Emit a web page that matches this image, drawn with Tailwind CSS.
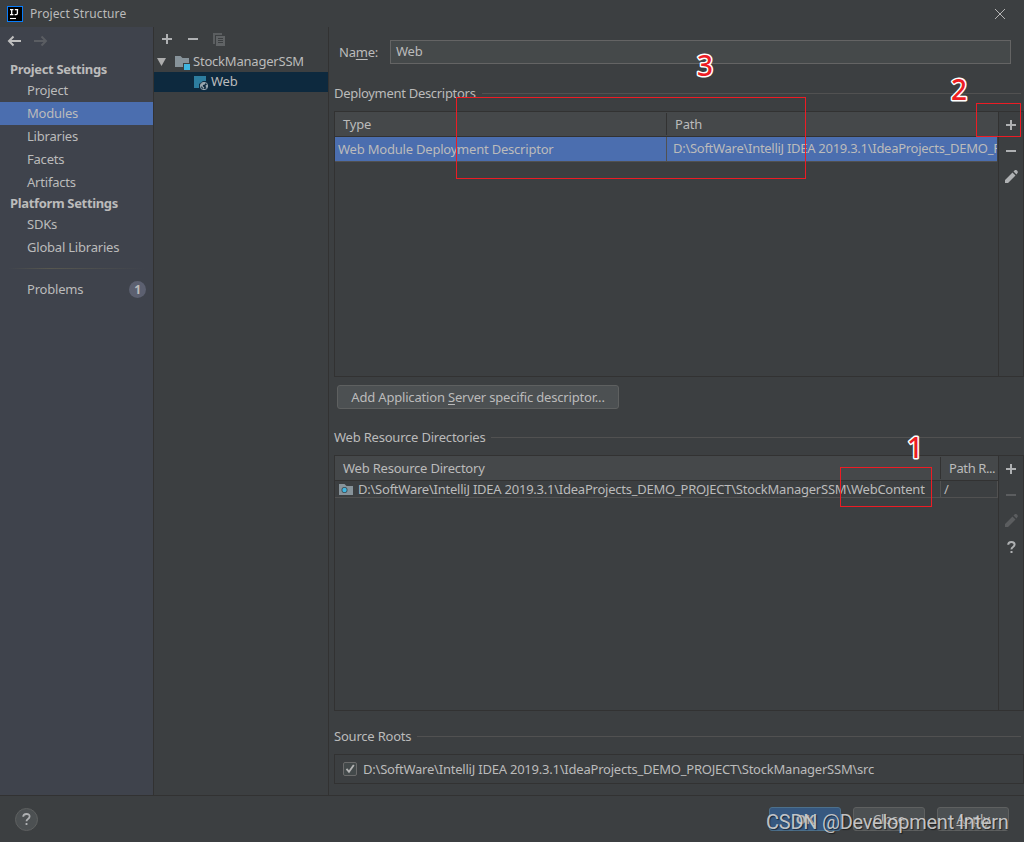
<!DOCTYPE html>
<html lang="en">

<head>
	<meta charset="UTF-8" />
	<meta name="viewport" content="width=device-width, initial-scale=1" />
	<title>Project Structure</title>
	<script src="https://cdn.jsdelivr.net/npm/@tailwindcss/browser@4"></script>
</head>

<body class="bg-[#3c3f41]">
	<div class="relative w-[1024px] h-[842px] overflow-hidden flex flex-col bg-[#3c3f41] text-[#bbbbbb] font-['Noto_Sans','Open_Sans',sans-serif] text-[13px] leading-[18px] tracking-[-0.21px] whitespace-nowrap">

		<!-- Title bar -->
		<header class="h-[27px] shrink-0 flex items-center pl-[7px] pr-[18px]">
			<svg class="w-4 h-4 shrink-0" viewBox="0 0 16 16">
				<rect width="16" height="16" fill="#087cfa" />
				<rect x="1" y="1" width="14" height="14" fill="#000" />
				<path d="M3 3.6h3.4M4.7 3.6v5M3 8.6h3.4M7.8 3.6h3.4M10.4 3.6v3.6q0 1.4-1.3 1.4H7.6" fill="none" stroke="#fff" stroke-width="1.3" />
				<path d="M3 12.5h6" stroke="#fff" stroke-width="1.1" />
			</svg>
			<span class="ml-[7px] text-[12px] tracking-[0.1px]">Project Structure</span>
			<svg class="ml-auto w-3 h-3" viewBox="0 0 12 12" stroke="#b4b4b4" stroke-width="1"><path d="M1 1l10 10M11 1L1 11" /></svg>
		</header>

		<div class="h-[768px] shrink-0 flex">
			<!-- Settings menu -->
			<nav class="w-[153px] shrink-0 bg-[#3f434c]">
				<div class="h-[33px] pt-[8px] pl-[7px] flex gap-[13px]">
					<svg class="w-[14px] h-3" viewBox="0 0 14 12" fill="none" stroke="#bfbfbf" stroke-width="2"><path d="M14 6H2M6.500 1.500L2 6l4.500 4.500" /></svg>
					<svg class="w-[14px] h-3" viewBox="0 0 14 12" fill="none" stroke="#5a5d62" stroke-width="2"><path d="M0 6h12M7.500 1.500L12 6l-4.500 4.500" /></svg>
				</div>
				<div class="h-[19px] pl-[10px] font-bold tracking-[-0.34px]">Project Settings</div>
				<ul class="leading-[23px]">
					<li class="h-[23px] pl-[27px]">Project</li>
					<li class="h-[23px] pl-[27px] bg-[#4b6eaf]">Modules</li>
					<li class="h-[23px] pl-[27px]">Libraries</li>
					<li class="h-[23px] pl-[27px]">Facets</li>
					<li class="h-[23px] pl-[27px]">Artifacts</li>
				</ul>
				<div class="h-[19px] pl-[10px] font-bold tracking-[-0.34px]">Platform Settings</div>
				<ul class="leading-[23px]">
					<li class="h-[23px] pl-[27px]">SDKs</li>
					<li class="h-[23px] pl-[27px]">Global Libraries</li>
				</ul>
				<div class="mt-[9px] mx-[8px] h-px bg-linear-to-r from-transparent via-[#57574f] via-30% to-transparent"></div>
				<div class="mt-[9px] h-[23px] pl-[27px] pr-[7px] flex items-center justify-between">
					<span class="-mt-px">Problems</span>
					<span class="w-[17px] h-[17px] rounded-full bg-[#5c6070] text-center text-[12px] leading-[17px] font-bold">1</span>
				</div>
			</nav>

			<!-- Module tree -->
			<aside class="w-[176px] shrink-0 border-x border-[#323232]">
				<div class="h-[25px] pl-[8px] pt-[6px] flex gap-[14px]">
					<svg class="w-[11px] h-3" viewBox="0 0 11 12" stroke="#afb1b3" stroke-width="2"><path d="M0 6h10M5 1v10" /></svg>
					<svg class="w-[11px] h-3 ml-px" viewBox="0 0 11 12" stroke="#afb1b3" stroke-width="2"><path d="M0 6h10" /></svg>
					<svg class="w-3 h-[13px]" viewBox="0 0 12 13"><path d="M0 0h9v2H2v9H0z" fill="#5b5e60" /><path d="M3 3h9v10H3z" fill="#606365" /><path d="M5 5.500h5M5 7.500h5M5 9.500h5" stroke="#3c3f41" /></svg>
				</div>
				<div class="h-5 flex items-center">
					<svg class="w-[9px] h-2 ml-[3px]" viewBox="0 0 9 8"><path d="M0 0h9L4.500 8z" fill="#adadad" /></svg>
					<svg class="w-[15px] h-[14px] ml-[9px] mt-[2px]" viewBox="0 0 15 14"><path d="M0 0h5.500l2 2H14v5H8v4H0z" fill="#87939a" /><path d="M9 8h6v6H9z" fill="#40b6e0" /></svg>
					<span class="ml-[3px] -mt-[2px]">StockManagerSSM</span>
				</div>
				<div class="h-5 flex items-center bg-[#0d293e]">
					<svg class="w-[15px] h-[15px] ml-[40px] mt-[3px]" viewBox="0 0 15 15"><path d="M0 0h12v5H9L5 8v4H0z" fill="#2d7d9f" /><circle cx="10" cy="10" r="3.700" fill="#0d293e" stroke="#9aa7b0" stroke-width="1" /><path d="M6.800 8.200L9 6.600l2.400.4-.6 1.400-1.800.6-.2 1.400 1.400.6-.2 2.200-1.400-1.600-1.800-1.600zM11.600 9.200l1.900-.4-.3 2.400-1.200 1z" fill="#9aa7b0" /></svg>
					<span class="ml-[2px] -mt-[2px]">Web</span>
				</div>
			</aside>

			<!-- Module editor -->
			<main class="flex-1 min-w-0 pl-[5px]">
				<div class="mt-[13px] h-6 flex items-center pl-[5px] pr-[13px]">
					<label class="w-[51px] -mt-px">Na<u class="underline underline-offset-2">m</u>e:</label>
					<div class="flex-1 h-6 border border-[#646464] bg-[#45494a] pl-[5px] leading-[21px]">Web</div>
				</div>

				<div class="mt-[20px] h-[18px] flex items-center gap-[6px] pr-[3px]">
					<span class="tracking-[-0.3px]">Deployment Descriptors</span>
					<div class="flex-1 h-px bg-[#515151]"></div>
				</div>
				<div class="mt-[9px] h-[266px] flex border border-[#323232]">
					<div class="flex-1 min-w-0">
						<div class="h-[25px] flex bg-[#45484a] border-b border-[#323232] leading-[25px]">
							<div class="w-[332px] my-px leading-[23px] pl-[8px] border-r border-[#323232]">Type</div>
							<div class="pl-[8px]">Path</div>
						</div>
						<div class="h-[25px] mr-px flex bg-[#4b6eaf] border-b border-[#515151] leading-[24px]">
							<div class="w-[332px] shrink-0 pl-[3px] border-r border-[#515151]">Web Module Deployment Descriptor</div>
							<div class="pl-[6px] overflow-hidden leading-[22px] tracking-[-0.28px]">D:\SoftWare\IntelliJ IDEA 2019.3.1\IdeaProjects_DEMO_PROJECT</div>
						</div>
					</div>
					<div class="w-[25px] shrink-0 border-l border-[#323232] flex flex-col items-center pt-[8px] pl-px">
						<svg class="w-[11px] h-[11px]" viewBox="0 0 11 11" stroke="#afb1b3" stroke-width="2"><path d="M0 5h10M5 0v10" /></svg>
						<svg class="w-[11px] h-[2px] mt-[19px]" viewBox="0 0 11 2"><path d="M0 0h10v2H0z" fill="#afb1b3" /></svg>
						<svg class="w-[13px] h-[13px] mt-[18px]" viewBox="0 0 13 13" fill="#afb1b3"><path d="M0 13v-3L7.500 2.500l3 3L3 13zM8.500 1.500L10 0q1-.4 2 .6t.8 2L11.500 4.500z" /></svg>
					</div>
				</div>

				<button class="mt-[8px] ml-[3px] block w-[282px] h-[24px] rounded-[3px] border border-[#5e6060] bg-[#4c5052] leading-[22px] tracking-[-0.18px]">Add Application <u class="underline underline-offset-2">S</u>erver specific descriptor...</button>

				<div class="mt-[19px] h-[18px] flex items-center gap-[6px] pr-[3px]">
					<span>Web Resource Directories</span>
					<div class="flex-1 h-px bg-[#515151]"></div>
				</div>
				<div class="mt-[9px] h-[256px] flex border border-[#323232]">
					<div class="flex-1 min-w-0">
						<div class="h-[25px] flex bg-[#45484a] border-b border-[#323232]">
							<div class="w-[606px] shrink-0 my-px leading-[23px] pl-[8px] border-r border-[#323232]">Web Resource Directory</div>
							<div class="pl-[8px] leading-[25px] tracking-[-0.4px]">Path R...</div>
						</div>
						<div class="h-[17px] flex border-b border-r border-[#515151] leading-[17px]">
							<div class="w-[606px] shrink-0 pl-[4px] flex items-center border-r border-[#515151]">
								<svg class="w-[14px] h-[11px] mr-[5px] shrink-0" viewBox="0 0 14 11"><path d="M0 0h5.500l2 2H14v9H0z" fill="#87939a" /><circle cx="5.500" cy="6" r="3" fill="#3c4a52" /><circle cx="5.500" cy="6" r="2.200" fill="#40b6e0" /></svg>
								<span class="tracking-[-0.235px]">D:\SoftWare\IntelliJ IDEA 2019.3.1\IdeaProjects_DEMO_PROJECT\StockManagerSSM\WebContent</span>
							</div>
							<div class="pl-[3px]">/</div>
						</div>
					</div>
					<div class="w-[25px] shrink-0 border-l border-[#323232] flex flex-col items-center pt-[8px] pl-px">
						<svg class="w-[11px] h-[11px]" viewBox="0 0 11 11" stroke="#afb1b3" stroke-width="2"><path d="M0 5h10M5 0v10" /></svg>
						<svg class="w-[11px] h-[2px] mt-[19px]" viewBox="0 0 11 2"><path d="M0 0h10v2H0z" fill="#5b5d5f" /></svg>
						<svg class="w-[13px] h-[13px] mt-[18px]" viewBox="0 0 13 13" fill="#5b5d5f"><path d="M0 13v-3L7.500 2.500l3 3L3 13zM8.500 1.500L10 0q1-.4 2 .6t.8 2L11.500 4.500z" /></svg>
						<svg class="w-[9px] h-3 mt-[14px]" viewBox="0 0 9 12" fill="none" stroke="#afb1b3" stroke-width="2"><path d="M1.200 3.800Q1.200 1 4.400 1t3.200 2.600Q7.600 5 6 6T4.500 8.300M4.500 10v2" /></svg>
					</div>
				</div>

				<div class="mt-[16px] h-[18px] flex items-center gap-[6px] pr-[3px]">
					<span>Source Roots</span>
					<div class="flex-1 h-px bg-[#515151]"></div>
				</div>
				<div class="mt-[9px] h-[30px] flex items-center pl-[8px] border border-[#323232]">
					<svg class="w-[14px] h-[14px] mr-[6px]" viewBox="0 0 14 14"><rect x=".5" y=".5" width="13" height="13" rx="1.500" fill="#43494a" stroke="#6b6b6b" /><path d="M3.500 6.800l2.500 3 4.800-6.800" fill="none" stroke="#b4b4b4" stroke-width="1.800" /></svg>
					<span class="tracking-[-0.22px]">D:\SoftWare\IntelliJ IDEA 2019.3.1\IdeaProjects_DEMO_PROJECT\StockManagerSSM\src</span>
				</div>
			</main>
		</div>

		<!-- Dialog buttons -->
		<footer class="flex-1 border-t border-[#323232] flex items-center pl-[15px] pr-[15px] gap-3">
			<div class="w-[23px] h-[23px] mr-auto rounded-full border border-[#5e6060] bg-[#4c5052] flex items-center justify-center">
				<svg class="w-[9px] h-3" viewBox="0 0 9 12" fill="none" stroke="#afb1b3" stroke-width="1.800"><path d="M1.200 3.800Q1.200 1 4.400 1t3.200 2.600Q7.600 5 6 6T4.500 8.300M4.500 10v2" /></svg>
			</div>
			<button class="w-[72px] h-6 rounded-[3px] border border-[#4c708c] bg-[#365880] font-bold">OK</button>
			<button class="w-[72px] h-6 rounded-[3px] border border-[#5e6060] bg-[#4c5052]">Close</button>
			<button class="w-[72px] h-6 rounded-[3px] border border-[#5e6060] bg-[#4c5052]"><u>A</u>pply</button>
		</footer>

		<!-- Callouts drawn over the dialog -->
		<div class="absolute left-[456px] top-[97px] w-[350px] h-[82px] border border-[#ed1c24]"></div>
		<div class="absolute left-[976px] top-[103px] w-[45px] h-[34px] border border-[#ed1c24]"></div>
		<div class="absolute left-[840px] top-[467px] w-[92px] h-[40px] border border-[#ed1c24]"></div>
		<svg class="absolute left-0 top-0 w-[1024px] h-[842px] font-['Noto_Sans',sans-serif] text-[28px] font-medium" fill="#ed1c24" stroke="#fff" stroke-width="3" stroke-linejoin="round" paint-order="stroke">
			<text x="697" y="75.500">3</text>
			<text x="951" y="99.500">2</text>
			<text x="907" y="457.500">1</text>
		</svg>
		<div class="absolute left-[766px] top-[810px] font-['Roboto',sans-serif] text-[20px] leading-[24px] tracking-[-0.25px] text-[#d6d6d6]/90 [text-shadow:1px_1px_1px_#0008]">CSDN @Development Intern</div>
	</div>
</body>

</html>
